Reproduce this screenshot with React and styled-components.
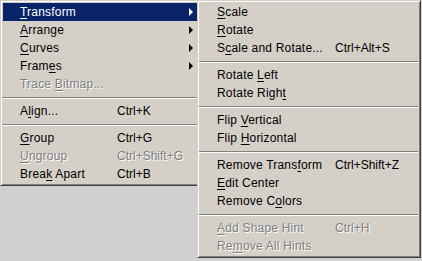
import React from "react";
import styled, { createGlobalStyle } from "styled-components";

const GlobalStyle = createGlobalStyle`
  html, body {
    margin: 0;
    padding: 0;
    background: #d0d0d0;
  }
  body {
    font-family: "Liberation Sans", Arial, sans-serif;
    font-size: 12px;
    overflow: hidden;
  }
`;

const leftItems = [
  { label: "Transform", key: 0, sub: true, active: true },
  { label: "Arrange", key: 0, sub: true },
  { label: "Curves", key: 0, sub: true },
  { label: "Frames", key: 4, sub: true },
  { label: "Trace Bitmap...", key: 6, disabled: true },
  "sep",
  { label: "Align...", key: 1, shortcut: "Ctrl+K" },
  "sep",
  { label: "Group", key: 0, shortcut: "Ctrl+G" },
  { label: "Ungroup", key: 0, shortcut: "Ctrl+Shift+G", disabled: true },
  { label: "Break Apart", key: 4, shortcut: "Ctrl+B" },
];

const subItems = [
  { label: "Scale", key: 0 },
  { label: "Rotate", key: 0 },
  { label: "Scale and Rotate...", key: 1, shortcut: "Ctrl+Alt+S" },
  "sep",
  { label: "Rotate Left", key: 7 },
  { label: "Rotate Right", key: 11 },
  "sep",
  { label: "Flip Vertical", key: 5 },
  { label: "Flip Horizontal", key: 5 },
  "sep",
  { label: "Remove Transform", key: 12, shortcut: "Ctrl+Shift+Z" },
  { label: "Edit Center", key: 0 },
  { label: "Remove Colors", key: 8 },
  "sep",
  { label: "Add Shape Hint", key: 0, shortcut: "Ctrl+H", disabled: true },
  { label: "Remove All Hints", key: 2, disabled: true },
];

const Desk = styled.div`
  display: flex;
  align-items: flex-start;
  width: 422px;
  height: 261px;
`;

const Panel = styled.div`
  position: relative;
  box-sizing: border-box;
  width: ${(p) => p.$width}px;
  margin-left: ${(p) => p.$overlap || 0}px;
  padding: 2px 2px 2px 2px;
  background: #d4d0c8;
  border: 1px solid;
  border-color: #d4d0c8 #404040 #404040 #d4d0c8;
  box-shadow: inset 1px 1px 0 #ffffff, inset -1px -1px 0 #808080;
  z-index: ${(p) => (p.$top ? 2 : 1)};
`;

const Row = styled.div`
  position: relative;
  display: flex;
  align-items: center;
  height: 18px;
  padding-left: 17px;
  white-space: nowrap;
  color: ${(p) => (p.$active ? "#ffffff" : p.$disabled ? "#808080" : "#000000")};
  background: ${(p) => (p.$active ? "#0a246a" : "transparent")};
  text-shadow: ${(p) => (p.$disabled ? "1px 1px 0 #ffffff" : "none")};
`;

const Label = styled.span`
  width: ${(p) => p.$width}px;
  flex-shrink: 0;
  letter-spacing: 0.2px;
`;

const Shortcut = styled.span`
  flex-shrink: 0;
`;

const Key = styled.span`
  text-decoration: underline;
  text-underline-offset: 2px;
`;

const Arrow = styled.span`
  position: absolute;
  right: 4px;
  top: 5px;
  width: 0;
  height: 0;
  border-top: 4px solid transparent;
  border-bottom: 4px solid transparent;
  border-left: 4px solid ${(p) => (p.$active ? "#ffffff" : "#000000")};
`;

const Separator = styled.div`
  height: 9px;
  margin: 0 0 0 -1px;
  display: flex;
  flex-direction: column;
  justify-content: center;
  &::before {
    content: "";
    display: block;
    height: 1px;
    background: #808080;
    border-bottom: 1px solid #ffffff;
  }
`;

const Mnemonic = ({ text, index }) => (
  <>
    {text.slice(0, index)}
    <Key>{text[index]}</Key>
    {text.slice(index + 1)}
  </>
);

const Menu = ({ items, width, labelWidth, overlap, top }) => (
  <Panel $width={width} $overlap={overlap} $top={top}>
    {items.map((item, i) =>
      item === "sep" ? (
        <Separator key={i} />
      ) : (
        <Row key={i} $active={item.active} $disabled={item.disabled}>
          <Label $width={labelWidth}>
            <Mnemonic text={item.label} index={item.key} />
          </Label>
          {item.shortcut && <Shortcut>{item.shortcut}</Shortcut>}
          {item.sub && <Arrow $active={item.active} />}
        </Row>
      )
    )}
  </Panel>
);

const App = () => {
  return (
    <>
      <GlobalStyle />
      <Desk>
        <Menu items={leftItems} width={200} labelWidth={97} />
        <Menu items={subItems} width={224} labelWidth={118} overlap={-3} top />
      </Desk>
    </>
  );
};

export default App;
